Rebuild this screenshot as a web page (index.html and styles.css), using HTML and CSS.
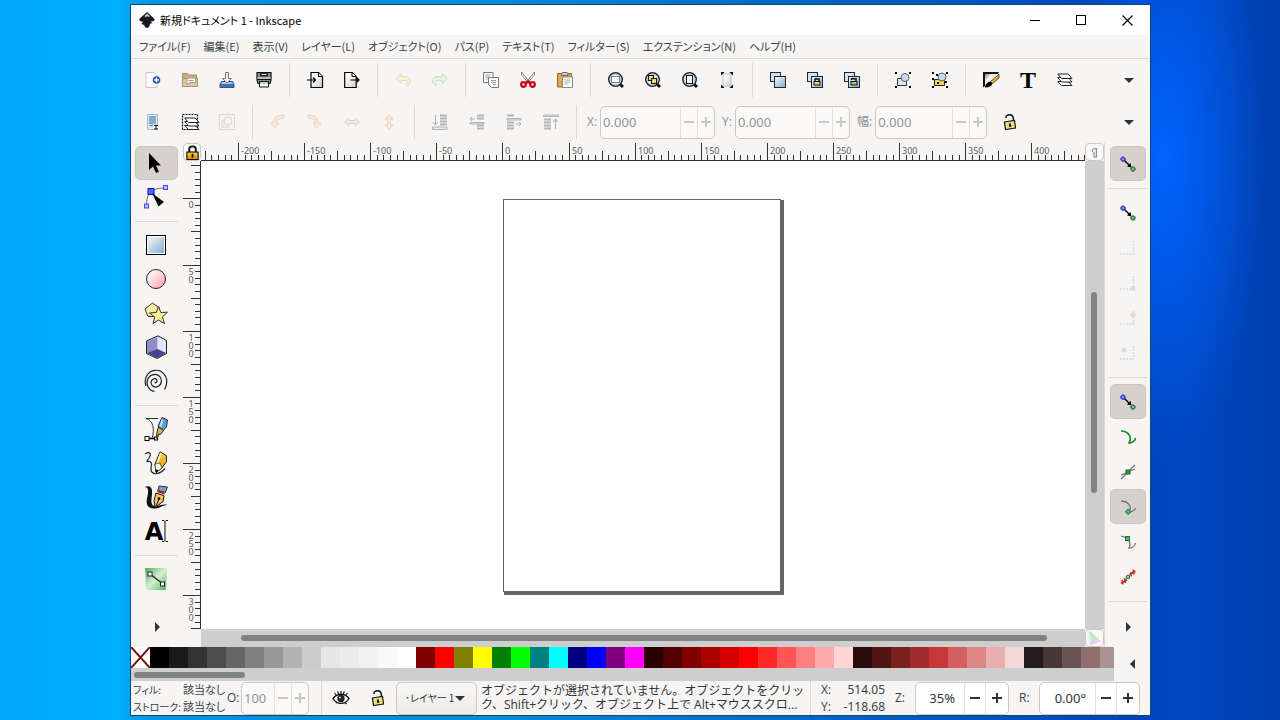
FILE: index.html
```html
<!DOCTYPE html>
<html lang="ja">
<head>
<meta charset="utf-8">
<title>新規ドキュメント 1 - Inkscape</title>
<link rel="stylesheet" href="styles.css">
</head>
<body>
<svg class="defs" aria-hidden="true">
  <defs>
    <linearGradient id="gBlue" x1="0" y1="0" x2="1" y2="1"><stop offset="0" stop-color="#f4f9fd"/><stop offset="1" stop-color="#86acd0"/></linearGradient>
    <linearGradient id="gPink" x1="0" y1="0" x2="1" y2="1"><stop offset="0.2" stop-color="#fff4f4"/><stop offset="1" stop-color="#ff9aa6"/></linearGradient>
    <linearGradient id="gGold" x1="0" y1="0" x2="0" y2="1"><stop offset="0" stop-color="#ffd23c"/><stop offset="1" stop-color="#e08a10"/></linearGradient>
    <linearGradient id="gYellow" x1="0" y1="0" x2="1" y2="1"><stop offset="0" stop-color="#fffbd0"/><stop offset="1" stop-color="#f3df62"/></linearGradient>
    <linearGradient id="gGreen" x1="0" y1="0" x2="1" y2="1"><stop offset="0" stop-color="#53a85a"/><stop offset="0.5" stop-color="#d4f0d2"/><stop offset="1" stop-color="#4fae5c"/></linearGradient>
    <linearGradient id="gInk" x1="0" y1="0" x2="1" y2="1"><stop offset="0" stop-color="#444"/><stop offset="0.4" stop-color="#fff"/><stop offset="0.6" stop-color="#ddd"/><stop offset="1" stop-color="#111"/></linearGradient>
    <linearGradient id="gGray" x1="0" y1="0" x2="1" y2="1"><stop offset="0.2" stop-color="#fff"/><stop offset="1" stop-color="#d0d0d0"/></linearGradient>
  </defs>
  <symbol id="snap" viewBox="0 0 16 16"><path d="M4 4l6 6" stroke="#000" stroke-width="1.4"/><path d="M11.5 11.5l-4.5-1 3.500-3.500z"/><rect x="1.400" y="1.400" width="3.400" height="3.400" rx="1" fill="#aab4ff" stroke="#3a3ad8" stroke-width="1.500" transform="rotate(45 3 3)"/><rect x="11.300" y="11.300" width="3.400" height="3.400" rx="1" fill="#9cc8a8" stroke="#2e7d3e" stroke-width="1.500" transform="rotate(45 13 13)"/></symbol>
  <symbol id="lens" viewBox="0 0 16 16"><path d="M12 12l3 3" stroke="#111" stroke-width="3"/><circle cx="7.500" cy="7.500" r="6.700" fill="#e3ecf5" stroke="#1c2730" stroke-width="1.600"/><circle cx="7.500" cy="7.500" r="5.500" fill="none" stroke="#a9bccd"/></symbol>
  <symbol id="unlock" viewBox="0 0 16 16"><path d="M4 4c-.5-4 6-4.500 7-1l.8 5" fill="none" stroke="#111" stroke-width="1.500"/><path d="M2.500 8l10-1.500 1 7.500-10 1.500z" fill="#efe27a" stroke="#111" stroke-width="1.200"/><path d="M7.800 9.500l.6 3.500" stroke="#111" stroke-width="2"/></symbol>
  <symbol id="stack" viewBox="0 0 16 16"><rect x="0.500" y="0.500" width="10" height="9" fill="#d6e2ee" stroke="#1b2733"/><rect x="4.500" y="4.500" width="11" height="11" fill="url(#gBlue)" stroke="#1b2733"/></symbol>
  <symbol id="down" viewBox="0 0 10 5"><path d="M0 0h10L5 5z" fill="#2e3436"/></symbol>
  <symbol id="layers" viewBox="0 0 16 16"><g fill="#fff" stroke="#222"><path d="M.7 9.500h10.500l3.800 4H4.500z"/><path d="M.7 5.500h10.500l3.800 4.500H4.500z"/><path d="M.7 2h10.500l3.800 4.500H4.500z"/></g></symbol>
</svg>

<main class="window">
  <header class="titlebar">
    <svg class="logo" viewBox="0 0 16 16"><path d="M8 0l7 6.500c1 1.200.8 2-.5 2.500l-3 .8c1 .5 2 .7 1 1.500l-1.500.7c-.5 1.500-.5 3.500-3 4-2.500-.5-2-2-3-3L2.500 12c-.5-1 1.500-1.200 1.500-2L1 9C0 8 .2 7 1 6.300z" fill="#17171f"/><path d="M8 1.500l3 2.700-1.500.8-1.500-1-1 1.500L5.500 4z" fill="#c8ccd6"/></svg>
    <h1 class="title">新規ドキュメント 1 - Inkscape</h1>
    <button class="winbtn" aria-label="最小化"><svg viewBox="0 0 11 11"><path d="M0 5.500h10" stroke="#000"/></svg></button>
    <button class="winbtn" aria-label="最大化"><svg viewBox="0 0 11 11"><rect x=".5" y=".5" width="9" height="9" fill="none" stroke="#000"/></svg></button>
    <button class="winbtn" aria-label="閉じる"><svg viewBox="0 0 11 11"><path d="M.5.5l10 10M10.500.5l-10 10" stroke="#000" stroke-width="1.200"/></svg></button>
  </header>

  <nav class="menubar">
    <button>ファイル(F)</button><button>編集(E)</button><button>表示(V)</button><button>レイヤー(L)</button><button>オブジェクト(O)</button><button>パス(P)</button><button>テキスト(T)</button><button>フィルター(S)</button><button>エクステンション(N)</button><button>ヘルプ(H)</button>
  </nav>

  <div class="toolbar" role="toolbar" aria-label="コマンド">
    <button class="tool" aria-label="新規"><svg viewBox="0 0 16 16"><path d="M1 .5h8l3 3v12H1z" fill="#fdfdfd" stroke="#c4c8cc"/><circle cx="11.500" cy="8" r="3.800" fill="#3465a4"/><path d="M11.500 5.800v4.400M9.300 8h4.400" stroke="#fff" stroke-width="1.300"/></svg></button>
    <button class="tool" aria-label="開く"><svg viewBox="0 0 16 16"><path d="M.5 1.500h5l1 1.500h8v11.500H.5z" fill="#c9b08a" stroke="#a38c68"/><path d="M.5 14.500v-8h15v8z" fill="#dcc8a4" stroke="#ab9570"/><path d="M5 6h8.500v4.500H8L5 12.500z" fill="#fff" stroke="#a59878"/><path d="M6.500 8.500h5" stroke="#999"/></svg></button>
    <button class="tool" aria-label="保存"><svg viewBox="0 0 16 16"><path d="M2.500 9.500h11l1.500 3v3H1v-3z" fill="#3f73b4" stroke="#2c548a"/><path d="M3 10h10l1 2H2z" fill="#aac4e0"/><path d="M6.500.5h3v6h3L8 11 3.500 6.500h3z" fill="#eee" stroke="#777"/></svg></button>
    <button class="tool" aria-label="印刷"><svg viewBox="0 0 16 16"><path d="M1 .5h14v7.500l-1 3.500H2L1 8z" fill="#8b8b8b" stroke="#111" stroke-width="1.200"/><path d="M4 1h8v3.500H4z" fill="#222"/><path d="M5.500 2.500h5" stroke="#ddd"/><path d="M1.500 6h13" stroke="#eee"/><path d="M1 7.500h14" stroke="#111"/><path d="M3.500 9.500h9v5.500h-9z" fill="#fff" stroke="#111"/><path d="M4 11h8" stroke="#b6d8b6" stroke-width="2"/></svg></button>
    <span class="sep"></span>
    <button class="tool" aria-label="インポート"><svg viewBox="0 0 16 16"><path d="M4 .5h7.500l4 4v11H4z" fill="url(#gGray)" stroke="#000" stroke-width="1.200"/><path d="M11.500 1v3.500h4" fill="#fff" stroke="#000"/><path d="M0 8h8M6 5.500L8.500 8 6 10.500" fill="none" stroke="#000" stroke-width="1.200"/></svg></button>
    <button class="tool" aria-label="エクスポート"><svg viewBox="0 0 16 16"><path d="M.7.5h7.500l4 4v11H.7z" fill="url(#gGray)" stroke="#000" stroke-width="1.200"/><path d="M8 1v3.500h4" fill="#fff" stroke="#000"/><path d="M6.500 8h8M12.500 5.500L15 8l-2.500 2.500" fill="none" stroke="#000" stroke-width="1.200"/></svg></button>
    <span class="sep"></span>
    <button class="tool faint" aria-label="元に戻す" disabled><svg viewBox="0 0 16 16"><path d="M6 1.500v3h4c7 0 7 8.500 1 9.500 2-2 2.500-5.500-1-5.500H6v3L.7 6.500z" fill="#f6e9a0" stroke="#c9a94a"/></svg></button>
    <button class="tool faint" aria-label="やり直す" disabled><svg viewBox="0 0 16 16"><path d="M10 1.500v3H6c-7 0-7 8.500-1 9.500-2-2-2.500-5.500 1-5.500h4v3l5.300-5z" fill="#cdeec0" stroke="#6db865"/></svg></button>
    <span class="sep"></span>
    <button class="tool" aria-label="コピー"><svg viewBox="0 0 16 16"><g fill="#fafafa" stroke="#77797a"><path d="M.5.5h9.500v10H.5z"/><path d="M5.500 5.500h10v10h-7l-3-3z"/></g><path d="M2.500 3h5M2.500 5h4M2.500 7h2M8 8.500h5M8 10.500h5M10 12.500h3" stroke="#999"/></svg></button>
    <button class="tool" aria-label="切り取り"><svg viewBox="0 0 16 16"><path d="M1.500 0l9 11-2 0L1.500 3z M14.500 0l-9 11h2l7-8z" fill="#f3f3f3" stroke="#888"/><g fill="none" stroke="#c80c16" stroke-width="2.300"><circle cx="3.500" cy="12.500" r="2.300"/><circle cx="12.500" cy="12.500" r="2.300"/><path d="M5.500 11.500L8 9.500l2.500 2"/></g></svg></button>
    <button class="tool" aria-label="貼り付け"><svg viewBox="0 0 16 16"><path d="M.5 1.500h14v13.500H.5z" fill="#dda74d" stroke="#9b6b20"/><path d="M4.500 3.500V1.500L6 .5h3.500l1.500 1v2z" fill="#ccc" stroke="#666"/><path d="M5.500 5h10v10.500h-10z" fill="#fff" stroke="#888"/><path d="M7.500 8h6M7.500 10h6M7.500 12h4" stroke="#aaa"/></svg></button>
    <span class="sep"></span>
    <button class="tool" aria-label="選択範囲ズーム"><svg viewBox="0 0 16 16"><use href="#lens"/><rect x="3.500" y="4.500" width="8" height="6" fill="#fff" stroke="#111" stroke-dasharray="1 1"/></svg></button>
    <button class="tool" aria-label="描画全体ズーム"><svg viewBox="0 0 16 16"><use href="#lens"/><g fill="#f5d873" stroke="#111"><rect x="3.500" y="3.500" width="5" height="5"/><rect x="6.500" y="6.500" width="5" height="5"/></g></svg></button>
    <button class="tool" aria-label="ページズーム"><svg viewBox="0 0 16 16"><use href="#lens"/><rect x="4.500" y="3.500" width="6" height="8" fill="#fff" stroke="#111"/></svg></button>
    <button class="tool" aria-label="ページ幅ズーム"><svg viewBox="0 0 16 16"><rect x="4" y="2" width="8" height="12" fill="url(#gGray)" stroke="#bbb"/><path d="M2 0h3.500L2 3.500zM14 0h-3.500L14 3.500zM2 16h3.500L2 12.500zM14 16h-3.500l3.500-3.500z"/></svg></button>
    <span class="sep"></span>
    <button class="tool" aria-label="複製"><svg><use href="#stack"/></svg></button>
    <button class="tool" aria-label="クローン作成"><svg viewBox="0 0 16 16"><use href="#stack"/><path d="M8 9V7h4v2" fill="none" stroke="#111" stroke-width="1.400"/><rect x="7" y="9.500" width="6" height="3.500" fill="#ffd34e" stroke="#111"/></svg></button>
    <button class="tool" aria-label="クローン解除"><svg viewBox="0 0 16 16"><use href="#stack"/><path d="M7.500 8V6.700h4.500V9" fill="none" stroke="#111" stroke-width="1.400"/><rect x="7" y="9.500" width="6" height="3.500" fill="#a6cf57" stroke="#111"/></svg></button>
    <span class="sep"></span>
    <button class="tool" aria-label="グループ化"><svg viewBox="0 0 16 16"><path d="M2.500 6.500h9v7h-9z" fill="#dde5ec" stroke="#333"/><circle cx="10" cy="5.500" r="4" fill="#cad9e9" stroke="#567"/><path d="M0 0h2v2H0zM14 0h2v2h-2zM0 14h2v2H0zM14 14h2v2h-2z"/></svg></button>
    <button class="tool" aria-label="グループ解除"><svg viewBox="0 0 16 16"><path d="M2.500 7.500h10v6h-10z" fill="#f8d658" stroke="#222"/><circle cx="10" cy="5" r="4" fill="#cad9e9" stroke="#567"/><path d="M0 0h2v2H0zM4 2h2v2H4zM14 0h2v2h-2zM0 6h2v2H0zM0 14h2v2H0zM14 14h2v2h-2zM13 9h2v2h-2zM5 10h2v2H5z"/></svg></button>
    <span class="sep"></span>
    <button class="tool" aria-label="フィル/ストローク"><svg viewBox="0 0 16 16"><path d="M0 0h16L10 11 0 15.500z" fill="url(#gInk)"/><path d="M0 0h16l-1 2H2v12l-2 1.500z" fill="#151515"/><path d="M2 15.500c0-3 3-6 5.500-6l2 2c-1 3-4 4-7.500 4z"/><path d="M7.500 9.500L14 4l2-2v4L9.500 11.500z" fill="#e9b42b" stroke="#222" stroke-width=".7"/></svg></button>
    <button class="tool" aria-label="テキスト設定"><svg viewBox="0 0 16 16"><text class="serif-glyph" x="8" y="16" text-anchor="middle">T</text></svg></button>
    <button class="tool" aria-label="レイヤー設定"><svg><use href="#layers"/></svg></button>
    <button class="more" aria-label="その他"><svg><use href="#down"/></svg></button>
  </div>

  <div class="toolbar" role="toolbar" aria-label="ツールコントロール">
    <button class="tool" aria-label="すべて選択"><svg viewBox="0 0 16 16"><path d="M2.500.5h10v15h-10z" fill="#e5eef7" stroke="#a9b6c4"/><path d="M4 3h7M4 5h7M4 7h7M4 9h7M4 11.500h4" stroke="#6b93bf" stroke-width="1.300"/><path d="M8 11h5v4H8z" fill="#fff"/><path d="M9 11.500h4M11 11.500v3.500M9 15h4" stroke="#111"/></svg></button>
    <button class="tool" aria-label="全レイヤーで選択"><svg viewBox="0 0 16 16"><rect x=".5" y=".5" width="15" height="15" fill="none" stroke="#000" stroke-width="1.200" stroke-dasharray="2 1"/><svg x="2" y="2" width="12" height="12"><use href="#layers"/></svg></svg></button>
    <button class="tool faint" aria-label="選択解除" disabled><svg viewBox="0 0 16 16"><rect x=".5" y=".5" width="15" height="15" fill="none" stroke="#b06a50" stroke-dasharray="2 1"/><path d="M3 6h7v7H3z" fill="#e8e8e8" stroke="#999"/><circle cx="9" cy="7" r="4" fill="#eee" stroke="#999"/></svg></button>
    <span class="sep"></span>
    <button class="tool faint" aria-label="左に回転" disabled><svg viewBox="0 0 16 16"><path d="M14 1C8 1 3 3 3 9H.7L5 14.500 9 9H6.500c0-3 3-5 7.500-5z" fill="#f3d3bb" stroke="#d89060"/></svg></button>
    <button class="tool faint" aria-label="右に回転" disabled><svg viewBox="0 0 16 16"><path d="M1 1c6 0 10 2 10 8h3l-4.500 5.500L6 9h2.500C8.500 6 5 4 1 4z" fill="#f3d3bb" stroke="#d89060"/></svg></button>
    <button class="tool faint" aria-label="水平反転" disabled><svg viewBox="0 0 16 16"><path d="M.7 8L5 4v2.500h6V4l4.300 4L11 12V9.500H5V12z" fill="#f3d3bb" stroke="#d89060"/></svg></button>
    <button class="tool faint" aria-label="垂直反転" disabled><svg viewBox="0 0 16 16"><path d="M8 .7L12 5H9.500v6H12l-4 4.300L4 11h2.500V5H4z" fill="#f3d3bb" stroke="#d89060"/></svg></button>
    <span class="sep"></span>
    <button class="tool dim" aria-label="最背面へ" disabled><svg viewBox="0 0 16 16"><path d="M3.500 1v9M1 8l2.500 3L6 8" fill="none" stroke="#666"/><path d="M8 1.500h7M8 4.500h7M8 7.500h7M8 10.500h7" stroke="#777" stroke-width="2"/><path d="M.5 13h14.500v2.500H.5z" fill="#ddd" stroke="#777"/></svg></button>
    <button class="tool dim" aria-label="背面へ" disabled><svg viewBox="0 0 16 16"><path d="M8 1.500h7M8 4.500h7M8 11.500h7M8 14.500h7" stroke="#777" stroke-width="2"/><path d="M1 8.500h14v1.500H1z" fill="#ddd" stroke="#777"/><path d="M6 5H1m2-2L1 5l2 2" fill="none" stroke="#666"/></svg></button>
    <button class="tool dim" aria-label="前面へ" disabled><svg viewBox="0 0 16 16"><path d="M1 1.500h7M1 8.500h7M1 11.500h7M1 14.500h7" stroke="#777" stroke-width="2"/><path d="M1 4.500h14v1.500H1z" fill="#ddd" stroke="#777"/><path d="M10 10h5m-2-2l2 2-2 2" fill="none" stroke="#666"/></svg></button>
    <button class="tool dim" aria-label="最前面へ" disabled><svg viewBox="0 0 16 16"><path d="M12.500 15V5M10 8l2.500-3L15 8" fill="none" stroke="#666"/><path d="M1 5.500h7M1 8.500h7M1 11.500h7M1 14.500h7" stroke="#777" stroke-width="2"/><path d="M.5 1h15v1.500H.5z" fill="#ddd" stroke="#777"/></svg></button>
    <span class="sep"></span>
    <label class="field-label" for="posx">X:</label>
    <div class="spin disabled"><input id="posx" type="text" value="0.000" disabled><button disabled aria-label="減らす" class="minus"></button><button disabled aria-label="増やす" class="plus"></button></div>
    <label class="field-label" for="posy">Y:</label>
    <div class="spin disabled"><input id="posy" type="text" value="0.000" disabled><button disabled aria-label="減らす" class="minus"></button><button disabled aria-label="増やす" class="plus"></button></div>
    <label class="field-label" for="width">幅:</label>
    <div class="spin narrow disabled"><input id="width" type="text" value="0.000" disabled><button disabled aria-label="減らす" class="minus"></button><button disabled aria-label="増やす" class="plus"></button></div>
    <button class="tool lockratio" aria-label="縦横比を固定"><svg><use href="#unlock"/></svg></button>
    <button class="more" aria-label="その他"><svg><use href="#down"/></svg></button>
  </div>

  <div class="workspace">
    <div class="toolbox" role="toolbar" aria-label="ツールボックス">
      <button class="active" aria-label="選択"><svg viewBox="0 0 24 24"><path d="M5 2v17l4-3.500 3 6.500 3-1.300-3-6.200h5z"/></svg></button>
      <button aria-label="ノード"><svg viewBox="0 0 24 24"><path d="M2.500 20C2.500 10 6 3 20 3" fill="none" stroke="#667"/><g fill="#b4b8ff" stroke="#4a4af0"><rect x=".5" y="19" width="4" height="4"/><rect x="19.500" y=".5" width="4" height="4"/></g><rect x="4" y="3.500" width="6" height="6" fill="#5666ee" stroke="#0a0ac8"/><path d="M8 8l12 9-5.500 4.500z"/></svg></button>
      <span class="rule"></span>
      <button aria-label="矩形"><svg viewBox="0 0 24 24"><rect x="2.500" y="2.500" width="19" height="19" fill="#fff" stroke="#000"/><rect x="4" y="4" width="16" height="16" fill="url(#gBlue)"/></svg></button>
      <button aria-label="円/弧"><svg viewBox="0 0 24 24"><circle cx="12" cy="12" r="9.500" fill="url(#gPink)" stroke="#222"/></svg></button>
      <button aria-label="星形"><svg viewBox="0 0 24 24"><g fill="url(#gYellow)" stroke="#333"><path d="M8.500 2l7 5-2.500 8.500H4L1 8z"/><path d="M14.500 5.500l2.300 6 6.700-.3-5 4.500 2 7-6-3.700-5.500 3.500 1.700-6.500L5.500 12l6.700-.5z"/></g></svg></button>
      <button aria-label="3D ボックス"><svg viewBox="0 0 24 24"><path d="M2.500 6L14 .8l8.500 4.700v13L13 23.500 2.500 18.500z" fill="#c9c9ec" stroke="#222"/><path d="M3 6.500L13.500 2v12L3 18z" fill="#8d8dc8"/><path d="M13.500 2L22 6v12l-8.500-4z" fill="#e6e6fa"/><path d="M3 18l10.500-4 8.500 4-9 5z" fill="#464690"/></svg></button>
      <button aria-label="らせん"><svg viewBox="0 0 24 24"><path d="M10.500 13.500c2 1 3.500-1.500 2-3-2-1.800-5.500 0-5.500 3 0 3.500 4 5.500 7 4 4-2 4.500-7.500 1.500-10.300C12 4 6 5.500 4 9.500 1.500 15 4.500 21.500 10.500 22.300M2 17C-.5 10 3.500 2 11 1.300 19 .8 24 8 22.500 15c-.3 2-1.200 4-2 5.500" fill="none" stroke="#222" stroke-width="1.200"/></svg></button>
      <span class="rule"></span>
      <button aria-label="ペン"><svg viewBox="0 0 24 24"><path d="M2 1.500h12M2 1.500c7 2 9 10 6 20" fill="none" stroke="#333"/><path d="M3 21.500h9" stroke="#000" stroke-width="1.500"/><rect x="1" y="19.500" width="4" height="4" fill="#fff" stroke="#000"/><rect x="10.500" y="20" width="3" height="3" fill="#fff" stroke="#000"/><path d="M14 9l4-8.500 5.500 2.500-1 7-4 4z" fill="#5e9cce" stroke="#234"/><path d="M18.500 2.500l-2 7" stroke="#bfe0f5" stroke-width="2"/><path d="M14.500 10l5 3.500-3 4-2-.5-1 5-1-1 .5-6z" fill="#ddb040" stroke="#222"/></svg></button>
      <button aria-label="鉛筆"><svg viewBox="0 0 24 24"><path d="M1 3c4-3 7-1 4 4-2 3-3 3.500-1 3.500 4-.5 4 3 3 6-1 9 9 7 14 1" fill="none" stroke="#333" stroke-width="1.300"/><path d="M11 13L16 .8l6.500 4v6L17 18l-5 3z" fill="url(#gGold)" stroke="#222"/><path d="M17 2l-4 11" stroke="#fff0a0" stroke-width="2"/><path d="M11 13l5-1 2 5-6 4.500z" fill="#fff5dc" stroke="#333" stroke-width=".7"/><path d="M11.500 18l3 1.500-2.500 2.500z"/></svg></button>
      <button aria-label="カリグラフィ"><svg viewBox="0 0 24 24"><path d="M.5 2c9-3 8 5 7 12-.5 5 1 8 6 7 3-.8 5-2 10-1-5 0-7 3-12 3.500C4 24 1 20 3.500 11 5 5 4 2 .5 2z" fill="#111"/><path d="M15 1l8.500 1-2.500 6-7-2z" fill="#6ea5cc" stroke="#234"/><path d="M13.500 6l7 2" stroke="#a22" stroke-width="2.500"/><path d="M12 8l8 2.500-1 6-8 6-1-7z" fill="#f2c75a" stroke="#111"/><path d="M12 21l3-7" stroke="#111"/><circle cx="15" cy="13.500" r="1.300"/></svg></button>
      <button aria-label="テキスト"><svg viewBox="0 0 24 24"><text class="sans-glyph" x="10" y="21" text-anchor="middle">A</text><path d="M18 1.500h2l1 1 1-1h2M21 2.500v19M18 22.500h2l1-1 1 1h2" fill="none" stroke="#111"/></svg></button>
      <span class="rule"></span>
      <button aria-label="グラデーション"><svg viewBox="0 0 24 24"><path d="M1 1h22l-1 22H2z" fill="url(#gGreen)"/><path d="M6 7l13 10" stroke="#222" stroke-width="1.300"/><g fill="#fff" stroke="#222"><rect x="4" y="5" width="4" height="4"/><rect x="16.500" y="15" width="4" height="4"/></g></svg></button>
      <button class="expand" aria-label="展開"><svg viewBox="0 0 5 10"><path d="M0 0v10l5-5z" fill="#2e3436"/></svg></button>
    </div>

    <div class="editor">
      <button class="corner" aria-label="ガイドをロック"><svg viewBox="0 0 16 16"><path d="M4.500 8V4.500c0-4 7-4 7 0V8" fill="none" stroke="#111" stroke-width="2"/><rect x="2" y="7.500" width="12" height="8" fill="url(#gGold)" stroke="#111" stroke-width="1.200"/><path d="M8 9.500v4" stroke="#111" stroke-width="2"/></svg></button>
      <svg class="ruler ruler-h"></svg>
      <button class="corner" aria-label="表示モード"><svg viewBox="0 0 16 16"><path d="M11 4H7C5 4 5 8 7.500 8v5H10V4.500" fill="#eee" stroke="#777"/></svg></button>
      <svg class="ruler ruler-v"></svg>
      <section class="canvas" aria-label="キャンバス"><div class="page"></div></section>
      <div class="scroll scroll-v"><span class="thumb"></span></div>
      <div class="scroll gutter"></div>
      <div class="scroll scroll-h"><span class="thumb"></span></div>
      <button class="corner" aria-label="カラー管理"><svg viewBox="0 0 16 16"><path d="M2 1c1.500-1 3 0 4 1.500L14.500 11 3 15.500C1 13 .5 5 2 1z" fill="#e3f0ee"/><path d="M2 1c1.500-1 3 0 4 1.500L10 7 5 10z" fill="#b8f0c6"/><path d="M10 6.500l4.500 4.500L5 10z" fill="#f7cdd0"/><path d="M3 15.500L14.500 11 5 9z" fill="#e2cdf2"/></svg></button>
    </div>

    <div class="snapbar" role="toolbar" aria-label="スナップ">
      <button class="active" aria-label="スナップ"><svg><use href="#snap"/></svg></button>
      <span class="rule"></span>
      <button aria-label="境界枠"><svg><use href="#snap"/></svg></button>
      <button class="ghost" aria-label="境界枠の辺" disabled><svg viewBox="0 0 16 16"><path d="M0 14h14.500M13.500 1v13" stroke="#466" stroke-width="1.500" stroke-dasharray="2 1"/></svg></button>
      <button class="ghost" aria-label="境界枠の角" disabled><svg viewBox="0 0 16 16"><path d="M0 14h14.500M13.500 1v13" stroke="#466" stroke-width="1.500" stroke-dasharray="2 1"/><circle cx="13" cy="13.500" r="2.500" fill="#577"/></svg></button>
      <button class="ghost" aria-label="辺の中点" disabled><svg viewBox="0 0 16 16"><path d="M0 14h14.500M13.500 1v13" stroke="#466" stroke-width="1.500" stroke-dasharray="2 1"/><circle cx="13" cy="5" r="2.500" fill="#577"/></svg></button>
      <button class="ghost" aria-label="境界枠の中心" disabled><svg viewBox="0 0 16 16"><path d="M0 14h14.500M13.500 1v13" stroke="#466" stroke-width="1.500" stroke-dasharray="2 1"/><circle cx="4" cy="5" r="2.500" fill="#577"/></svg></button>
      <span class="rule"></span>
      <button class="active" aria-label="ノード"><svg><use href="#snap"/></svg></button>
      <button aria-label="パス"><svg viewBox="0 0 16 16"><path d="M1 2c6 0 12 5 8 12 3 0 6-2 6.500-5" fill="none" stroke="#168a24" stroke-width="1.600"/></svg></button>
      <button aria-label="交点"><svg viewBox="0 0 16 16"><path d="M1 15L15 1M1 11c5-1 9-5 14-6" fill="none" stroke="#777" stroke-width="1.200"/><rect x="6" y="6" width="4" height="4" fill="#3a8a48" stroke="#1d6a2c"/></svg></button>
      <button class="active" aria-label="シャープノード"><svg viewBox="0 0 16 16"><path d="M1 2c6 0 12 5 8 11 3 0 6-2 6.500-4" fill="none" stroke="#777" stroke-width="1.300"/><rect x="6.500" y="11" width="3.400" height="3.400" fill="#8fc79a" stroke="#2e8a40" stroke-width="1.400" transform="rotate(45 8.200 12.700)"/></svg></button>
      <button aria-label="スムーズノード"><svg viewBox="0 0 16 16"><path d="M1 2l6 2c3 3 4 6 2 10 3 0 6-2 6.500-5" fill="none" stroke="#777" stroke-width="1.300"/><rect x="5.500" y="2.500" width="4" height="4" fill="#58ad68" stroke="#1d7a2c"/></svg></button>
      <button aria-label="線の中点"><svg viewBox="0 0 16 16"><path d="M1 15L15 1" stroke="#888"/><path d="M2 11l1 4.500M4.500 9l1 5M1 14l6-3M10.500 3l1 4.500M13 .5l1 5M9.500 5.500l6-3" stroke="#c22a2a" stroke-width="1.400"/><circle cx="8" cy="8" r="1.800" fill="#8fc79a" stroke="#1d7a2c"/></svg></button>
      <span class="rule"></span>
      <button class="expand" aria-label="展開"><svg viewBox="0 0 5 10"><path d="M0 0v10l5-5z" fill="#2e3436"/></svg></button>
    </div>
  </div>

  <div class="palette">
    <div class="swatches"><button class="none" aria-label="なし"><svg viewBox="0 0 19 21" preserveAspectRatio="none"><path d="M0 0l19 21M19 0L0 21" stroke="#7a1010" stroke-width="2"/></svg></button></div>
    <button class="palette-menu" aria-label="パレット"><svg viewBox="0 0 5 10"><path d="M5 0v10L0 5z" fill="#2e3436"/></svg></button>
    <div class="palette-scroll"><span class="thumb"></span></div>
  </div>

  <footer class="status">
    <dl class="style"><dt>フィル:</dt><dd>該当なし</dd><dt>ストローク:</dt><dd>該当なし</dd></dl>
    <label class="opacity-label" for="opacity">O:</label>
    <div class="spin small disabled"><input id="opacity" type="text" value="100" disabled><button disabled aria-label="減らす" class="minus"></button><button disabled aria-label="増やす" class="plus"></button></div>
    <span class="sep status-sep"></span>
    <button class="tool" aria-label="レイヤー表示"><svg viewBox="0 0 16 16"><path d="M0 8.500c4-5.500 12-5.500 16 0-4 6.500-12 6.500-16 0z" fill="#fff" stroke="#111" stroke-width="1.400"/><circle cx="8" cy="8.500" r="3.700" fill="#222"/><circle cx="7" cy="7.500" r="1" fill="#ddd"/><path d="M1.500 3l2 2.500M4.500 1.500L6 4.500M8 1v3M11.500 1.500L10 4.500M14.500 3l-2 2.500M3 13l1-1M12 12.500l1.500 1.500" stroke="#111" stroke-width="1.200"/></svg></button>
    <button class="tool" aria-label="レイヤーロック"><svg><use href="#unlock"/></svg></button>
    <div class="layer"><select aria-label="レイヤー"><option>･レイヤー 1</option></select><svg><use href="#down"/></svg></div>
    <p class="message">オブジェクトが選択されていません。オブジェクトをクリック、Shift+クリック、オブジェクト上で Alt+マウススクロ...</p>
    <dl class="coords"><dt>X:</dt><dd>514.05</dd><dt>Y:</dt><dd>-118.68</dd></dl>
    <label class="view-label" for="zoom">Z:</label>
    <div class="spin view"><input id="zoom" type="text" value="35%"><button aria-label="縮小" class="minus"></button><button aria-label="拡大" class="plus"></button></div>
    <label class="view-label" for="rotation">R:</label>
    <div class="spin view wide"><input id="rotation" type="text" value="0.00°"><button aria-label="減らす" class="minus"></button><button aria-label="増やす" class="plus"></button></div>
  </footer>
</main>
<script src="app.js"></script>
</body>
</html>
```

FILE: styles.css
```css
* { box-sizing: border-box; }

html { height: 100%; }

body {
  height: 100%;
  margin: 0;
  padding: 4px 129px 4px 130px;
  overflow: hidden;
  color: #3b4245;
  font: 12px/16px "Open Sans", "Noto Sans CJK JP", sans-serif;
  background:
    radial-gradient(ellipse 100px 300px at 91% 22%, #0064ff, #0064ff00),
    linear-gradient(90deg, #00a6fa 0, #00b0ff 9%, #0094de 12%, #008ad4 40%, #0068c4 62%, #0044b8 88%, #0046c0 93%, #0040b0 100%);
}

.defs { position: absolute; width: 0; height: 0; }

button, input, select { margin: 0; padding: 0; border: 0; background: none; color: inherit; font: inherit; }

.window {
  display: grid;
  grid-template-rows: 30px 24px 42px 42px minmax(0, 1fr) 34px 34px;
  grid-template-columns: minmax(0, 1fr);
  height: 100%;
  border: 1px solid #0b4a78;
  background: #f6f5f4;
}

/* Title and menus */
.titlebar { display: flex; align-items: center; padding-left: 8px; background: #fff; color: #000; }
.logo { width: 16px; height: 16px; }
.title { flex: 1; margin: 0 0 0 5px; font: 400 11px/16px "Noto Sans CJK JP", sans-serif; font-feature-settings: "palt"; }
.winbtn { display: grid; place-items: center; width: 46px; height: 30px; }
.winbtn svg { width: 11px; height: 11px; }

.menubar { display: flex; gap: 13px; padding: 0 0 1px 8px; border-bottom: 1px solid #dcdad8; white-space: nowrap; font: 11px/16px "Noto Sans CJK JP", sans-serif; font-feature-settings: "palt"; }

/* Toolbars */
.toolbar { display: flex; align-items: center; padding-left: 3px; }
.tool { display: grid; flex: none; place-items: center; width: 37px; height: 34px; }
.tool svg { width: 16px; height: 16px; overflow: visible; }
.faint { opacity: 0.35; }
.dim { opacity: 0.5; }
.sep { flex: none; width: 1px; height: 34px; margin: 0 6px 0 7px; background: #dcdad8; }
.more { display: grid; place-items: center; width: 22px; height: 34px; margin-left: auto; margin-right: 10px; }
.more svg { width: 10px; height: 5px; }
.serif-glyph { font: bold 24px "Liberation Serif", serif; }
.sans-glyph { font: bold 24px "DejaVu Sans", sans-serif; }

.field-label { margin: 0 3px 0 7px; color: #8f9193; }
.sep + .field-label { margin-left: 4px; }

.spin { display: flex; flex: none; width: 115px; height: 33px; overflow: hidden; border: 1px solid #cdc7c2; border-radius: 5px; background: #fff; font: 13px/18px "Noto Sans", sans-serif; }
.spin.narrow { width: 112px; }
.spin input { flex: 1; min-width: 0; padding-left: 2px; }
.spin button { position: relative; flex: none; width: 17px; border-left: 1px solid #e4e1de; }
.spin button::before, .spin .plus::after { content: ""; position: absolute; top: 50%; left: 50%; width: 10px; height: 2px; margin: -1px 0 0 -5px; background: currentColor; }
.spin .plus::after { transform: rotate(90deg); }
.spin.disabled { background: #faf9f8; color: #929595; }
.spin.disabled button { color: #c6c7c7; }
.lockratio { margin-left: 4px; }

/* Work area */
.workspace { display: grid; grid-template-columns: 52px minmax(0, 1fr) 46px; min-height: 0; }

.toolbox, .snapbar { display: flex; flex-direction: column; align-items: center; padding-top: 3px; }
.toolbox { padding-right: 2px; }
.snapbar { border-left: 1px solid #dcdad8; }
.toolbox button, .snapbar button { display: grid; flex: none; place-items: center; width: 43px; height: 34px; border: 1px solid transparent; border-radius: 5px; }
.snapbar button { width: 36px; height: 35px; }
.toolbox svg { width: 24px; height: 24px; overflow: visible; }
.snapbar svg { width: 16px; height: 16px; }
.toolbox .active, .snapbar .active { border-color: #cdc7c2; background: #d6d1cd; }
.rule { flex: none; align-self: stretch; height: 1px; margin: 7px 3px 6px 4px; background: #dcdad8; }
.ghost { opacity: 0.18; }
.toolbox .expand, .snapbar .expand { height: 20px; margin-top: auto; margin-bottom: 10px; padding-left: 2px; }
.expand svg { width: 5px; height: 10px; }

.editor { display: grid; grid-template-columns: 18px minmax(0, 1fr) 19px; grid-template-rows: 18px minmax(0, 1fr) 18px; min-height: 0; }
.corner { display: grid; place-items: center; border: 1px solid #cdc7c2; border-radius: 4px; background: #f9f8f7; }
.corner svg { width: 15px; height: 15px; }
.ruler { display: block; width: 100%; height: 100%; overflow: hidden; fill: #2e3436; font: 9px "Noto Sans", sans-serif; }
.ruler text { fill: #5a5e60; }
.ruler-h { border-bottom: 1px solid #2e3436; }
.ruler-v { border-right: 1px solid #2e3436; }

.canvas { position: relative; overflow: hidden; background: #fff; }
.page { position: absolute; left: 302px; top: 38px; width: 278px; height: 393px; border: 1px solid #666; background: #fff; box-shadow: 2px 2px 0 1px #666; clip-path: inset(0 -3px -3px 0); }

.scroll { position: relative; background: #cecece; }
.gutter { background: none; }
.thumb { position: absolute; border-radius: 3px; background: #7f8383; }
.scroll-v .thumb { top: 28%; bottom: 29%; left: 6px; width: 6px; }
.scroll-h .thumb { left: 40px; right: 38px; top: 6px; height: 6px; }

/* Palette */
.palette { display: grid; grid-template-columns: minmax(0, 1fr) 36px; grid-template-rows: 21px 13px; }
.swatches { display: flex; overflow: hidden; }
.swatches button { flex: none; width: 19px; height: 21px; }
.none { background: #fff; }
.none svg { display: block; width: 19px; height: 21px; }
.palette-menu { display: grid; grid-row: span 2; place-items: center; }
.palette-menu svg { width: 5px; height: 10px; }
.palette-scroll { position: relative; background: #cecece; }
.palette-scroll .thumb { left: 3px; top: 4px; width: 111px; height: 6px; }

/* Status bar */
.status { display: flex; align-items: center; padding-left: 2px; white-space: nowrap; }
.status dl { display: grid; flex: none; margin: 0; font-size: 12px; line-height: 17px; }
.status dd { margin: 0; }
.status .style { grid-template-columns: 50px 44px; font-family: "Noto Sans CJK JP", sans-serif; font-size: 11px; font-feature-settings: "palt"; }
.style dt { font-size: 10px; }
.opacity-label { width: 14px; }
.spin.small { width: 68px; }
.status .sep { margin: 0 0 0 12px; }
.status .layer { position: relative; width: 81px; height: 33px; flex: none; }
.layer select { width: 100%; height: 100%; padding-left: 8px; border: 1px solid #cdc7c2; border-radius: 5px; appearance: none; background: linear-gradient(#f8f7f6, #edebe9); font: 10px/16px "Noto Sans CJK JP", sans-serif; font-feature-settings: "palt"; color: #2e3436; }
.layer svg { position: absolute; top: 14px; right: 12px; width: 10px; height: 5px; pointer-events: none; }
.message { flex: 1; align-self: stretch; min-width: 0; margin: 0 0 0 4px; overflow: hidden; border-right: 1px solid #dcdad8; color: #2e3436; line-height: 14px; padding-top: 3px; white-space: normal; word-break: break-all; }
.coords { grid-template-columns: 16px 48px; }
.status .coords { margin: 0 10px; }
.coords dd { text-align: right; font-family: "Noto Sans", sans-serif; }
.view-label { width: 20px; flex: none; }
.spin.view { width: 94px; color: #2e3436; margin-right: 10px; }
.spin.view.wide { width: 101px; }
.view input { text-align: right; padding-right: 9px; }
.view .minus { width: 21px; }
.view .plus { width: 23px; }
```

FILE: app.js
```js
const SCALE = 1.3225;
const NS = "http://www.w3.org/2000/svg";

function add(svg, name, attrs, text) {
  const node = document.createElementNS(NS, name);
  for (const key in attrs) node.setAttribute(key, attrs[key]);
  if (text !== undefined) node.textContent = text;
  svg.appendChild(node);
}

function drawRuler(svg, origin, vertical) {
  svg.replaceChildren();
  const length = vertical ? svg.clientHeight : svg.clientWidth;
  const first = Math.ceil(-origin / SCALE / 5) * 5;
  for (let unit = first; origin + unit * SCALE < length; unit += 5) {
    const at = Math.floor(origin + unit * SCALE);
    const size = unit % 50 === 0 ? 18 : unit % 25 === 0 ? 9 : 5;
    add(svg, "rect", vertical
      ? { x: 17 - size, y: at, width: size, height: 1 }
      : { x: at, y: 17 - size, width: 1, height: size });
    if (unit % 50) continue;
    if (vertical) {
      [...String(unit)].forEach((digit, i) =>
        add(svg, "text", { x: 8, y: at + 10 + i * 8, "text-anchor": "middle" }, digit));
    } else {
      add(svg, "text", { x: at + 3, y: 11 }, unit);
    }
  }
}

function drawRulers() {
  drawRuler(document.querySelector(".ruler-h"), 301.9, false);
  drawRuler(document.querySelector(".ruler-v"), 37.9, true);
}

const colors = ("000000 1a1a1a 333333 4d4d4d 666666 808080 999999 b3b3b3 cccccc e6e6e6 ececec f2f2f2 f9f9f9 ffffff " +
  "800000 ff0000 808000 ffff00 008000 00ff00 008080 00ffff 000080 0000ff 800080 ff00ff " +
  "2b0000 550000 800000 aa0000 d40000 ff0000 ff2a2a ff5555 ff8080 ffaaaa ffd5d5 " +
  "280b0b 501616 782121 a02c2c c83737 d35f5f de8787 e9afaf f4d7d7 241c1c 483737 6c5353 916f6f ac9393").split(" ");

const swatches = document.querySelector(".swatches");
for (const color of colors) {
  const swatch = document.createElement("button");
  swatch.style.backgroundColor = "#" + color;
  swatch.setAttribute("aria-label", "#" + color);
  swatches.appendChild(swatch);
}

drawRulers();
window.addEventListener("resize", drawRulers);
```
